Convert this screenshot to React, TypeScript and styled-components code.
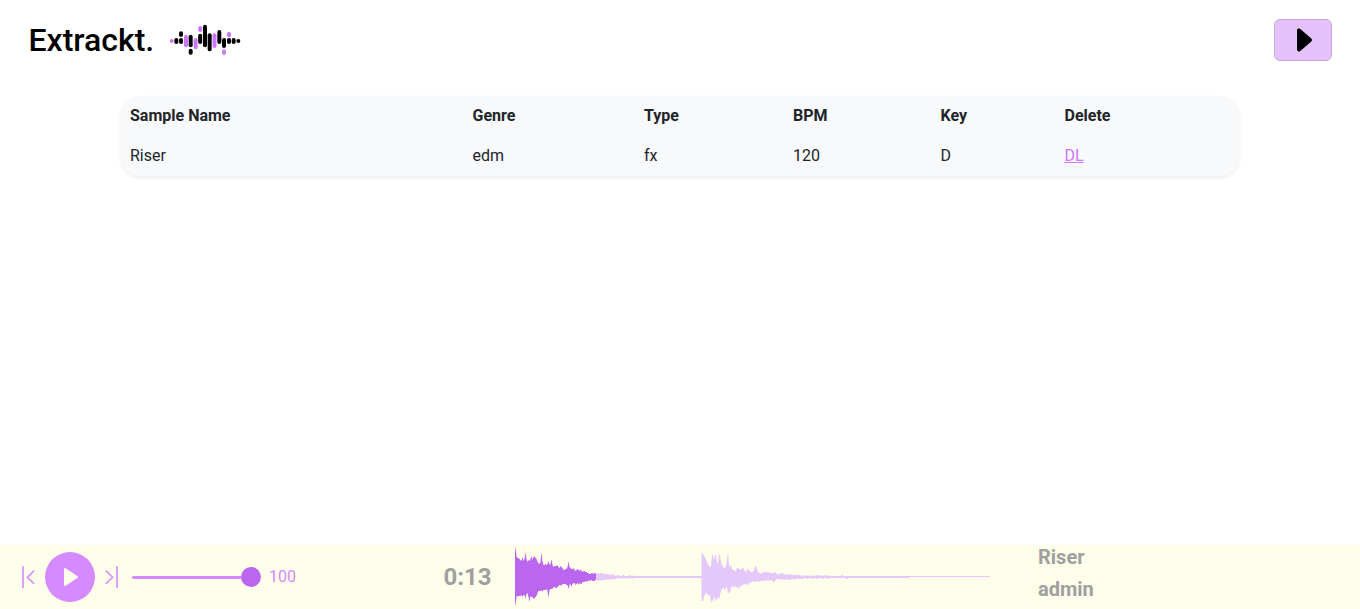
import React from 'react';
import styled, { createGlobalStyle } from 'styled-components';

const GlobalStyle = createGlobalStyle`
  *, *::before, *::after { box-sizing: border-box; }
  body {
    margin: 0;
    background: #fff;
    color: #212529;
    font-family: Roboto, "Liberation Sans", sans-serif;
    font-size: 16px;
    line-height: 1.5;
  }
`;

const Page = styled.div`
  display: flex;
  flex-direction: column;
  height: 100vh;
  overflow: hidden;
`;

const Header = styled.header`
  display: flex;
  align-items: center;
  justify-content: space-between;
  height: 80px;
  padding: 0 28px 0 28.5px;
`;

const Brand = styled.div`
  display: flex;
  align-items: center;
  gap: 14.5px;
`;

const BrandName = styled.h1`
  margin: 0;
  color: #000;
  font-size: 32px;
  font-weight: 500;
  line-height: 40px;
`;

const MenuButton = styled.button`
  display: flex;
  align-items: center;
  justify-content: center;
  width: 58px;
  height: 42px;
  padding: 0;
  border: 1px solid #c9a9dd;
  border-radius: 6px;
  background: #e5c0fb;
`;

const Main = styled.main`
  flex: 1;
  padding: 16px 121px 0;
`;

const Table = styled.div`
  padding-left: 1px;
  border-radius: 20px;
  background: #f8f9fb;
  box-shadow: 0 2px 4px rgba(0, 0, 0, 0.075);
  overflow: hidden;
`;

const Row = styled.div<{ $head?: boolean }>`
  display: grid;
  grid-template-columns: 342.5px 171.5px 149px 147.5px 124px 1fr;
  font-weight: ${(p) => (p.$head ? 700 : 400)};
`;

const Cell = styled.div`
  padding: 8px;
`;

const DeleteLink = styled.a`
  color: #cc77ff;
  text-decoration: underline;
`;

const Player = styled.footer`
  display: flex;
  align-items: center;
  height: 64px;
  padding-left: 22px;
  background: #fefeeb;
`;

const Transport = styled.div`
  display: flex;
  align-items: center;
  gap: 10px;
  width: 96px;
`;

const PlayButton = styled.div`
  display: flex;
  flex: none;
  align-items: center;
  justify-content: center;
  width: 50px;
  height: 50px;
  border-radius: 50%;
  background: #d68aff;
`;

const Volume = styled.div`
  display: flex;
  align-items: center;
  width: 129px;
  margin-left: 14px;
`;

const Track = styled.div`
  flex: 1;
  height: 3px;
  border-radius: 2px 0 0 2px;
  background: #d68aff;
`;

const Knob = styled.div`
  width: 20px;
  height: 20px;
  border-radius: 50%;
  background: #bb66ee;
`;

const VolumeValue = styled.span`
  width: 182.5px;
  padding-left: 8px;
  color: #d68aff;
`;

const Time = styled.div`
  width: 71.5px;
  color: #a0a0a0;
  font-size: 24px;
  font-weight: 700;
`;

const TrackInfo = styled.div`
  margin-left: 48px;
  padding-bottom: 8px;
  color: #a0a0a0;
  font-size: 20px;
  font-weight: 700;
  line-height: 32px;
`;

/* Each bar: centre x, top, bottom, accent flag */
const LOGO_BARS: [number, number, number, boolean?][] = [
  [35, 72, 84, true], [49, 69, 87], [63, 49, 66], [63, 69, 87], [78, 59, 97, true],
  [92, 59, 97], [92, 101, 119], [107, 69, 103, true], [120.5, 33, 51, true], [120.5, 56, 87],
  [135, 29, 97], [149, 55, 109], [163.5, 55, 99, true], [178, 45, 87], [192, 69, 99],
  [192, 103, 120, true], [207, 50, 67, true], [207, 69, 87], [221, 69, 87], [235, 72, 84],
];

const Logo = () => (
  <svg width="72" height="32" viewBox="27 27 216 96">
    {LOGO_BARS.map(([x, top, bottom, accent], i) => (
      <rect key={i} x={x - 6} y={top} width="12" height={bottom - top} rx="6" fill={accent ? '#cc77ff' : '#000'} />
    ))}
  </svg>
);

const SkipSvg = styled.svg`
  flex: none;
`;

const SkipIcon = ({ next }: { next?: boolean }) => (
  <SkipSvg width="13" height="22" viewBox="0 0 13 22" fill="none" stroke="#d68aff" strokeWidth="1.6">
    {next ? <path d="M.7 4.5 7.6 11.2.7 18M12 0v22" /> : <path d="M12.3 4.5 5.4 11.2l6.9 6.8M1 0v22" />}
  </SkipSvg>
);

/* Amplitudes above and below the centre line, one value per pixel column */
const FIRST_UP = [
  29, 21, 19, 19, 18, 17, 16, 20, 16, 18, 25, 18, 15, 17, 16, 18, 21, 17, 20, 21,
  19, 18, 15, 14, 13, 15, 25, 16, 12, 12, 13, 12, 13, 16, 12, 13, 18, 12, 10, 11,
  11, 11, 12, 10, 9, 11, 10, 9, 7, 7, 8, 8, 10, 16, 10, 9, 8, 8, 9, 7,
  6, 7, 8, 7, 6, 8, 6, 5, 6, 6, 5, 5, 4, 4, 3, 3, 4, 4, 3, 4, 4,
];
const FIRST_DOWN = [
  28, 20, 19, 19, 19, 19, 18, 20, 18, 18, 22, 17, 16, 20, 25, 19, 20, 20, 22, 21,
  20, 19, 16, 14, 14, 14, 13, 15, 13, 13, 13, 12, 14, 21, 13, 12, 12, 12, 10, 10,
  11, 11, 10, 9, 8, 8, 9, 7, 7, 7, 7, 8, 8, 12, 8, 7, 10, 7, 6, 6,
  8, 7, 6, 8, 6, 7, 7, 5, 5, 5, 4, 5, 4, 4, 3, 4, 3, 4, 4, 4, 3,
];

const TAIL_UP = [
  3, 4, 4, 3, 4, 4, 4, 3, 3, 3, 3, 3, 3, 2, 2, 3, 3, 2, 2, 1,
  1, 2, 2, 1, 1, 1, 2, 2, 1, 1, 1, 1, 1, 2, 2, 1, 1, 1, 2, 1,
];
const TAIL_DOWN = [
  3, 3, 4, 3, 4, 3, 3, 4, 3, 3, 2, 3, 2, 3, 2, 3, 2, 2, 2, 2,
  1, 1, 2, 1, 2, 1, 1, 2, 1, 1, 2, 1, 1, 1, 2, 1, 2, 1, 1, 1,
];

const SECOND_UP = [
  24, 23, 21, 20, 18, 15, 13, 11, 10, 11, 22, 22, 16, 23, 21, 14, 14, 23, 22, 15,
  12, 10, 9, 9, 11, 18, 25, 12, 10, 12, 8, 7, 7, 6, 6, 9, 9, 8, 8, 7,
  9, 10, 7, 6, 5, 7, 8, 7, 6, 5, 5, 5, 7, 11, 11, 8, 5, 4, 4, 3,
  4, 5, 4, 5, 6, 5, 4, 5, 4, 4, 4, 3, 4, 5, 4, 3, 2, 3, 4, 3,
  4, 4, 2, 3, 3, 2, 3, 3, 2, 3, 2, 2, 2, 2, 2, 2, 2, 2, 1, 2,
];
const SECOND_DOWN = [
  24, 24, 20, 18, 15, 17, 18, 19, 18, 27, 22, 25, 19, 22, 25, 20, 22, 22, 18, 14,
  12, 11, 12, 13, 10, 10, 17, 15, 16, 11, 9, 11, 9, 9, 11, 9, 13, 9, 11, 9,
  8, 8, 7, 7, 8, 7, 9, 6, 6, 5, 5, 4, 4, 5, 5, 4, 4, 5, 5, 4,
  3, 4, 4, 4, 3, 4, 3, 4, 3, 3, 4, 4, 6, 4, 2, 2, 2, 3, 2, 2,
  3, 2, 3, 3, 2, 2, 3, 3, 2, 3, 2, 2, 3, 2, 2, 1, 2, 2, 2, 2,
];

const END_UP = Array.from({ length: 30 }, (_, i) => (i % 3 === 0 || i % 7 === 2 ? 2 : 1));
const END_DOWN = Array.from({ length: 30 }, (_, i) => (i % 5 < 2 ? 2 : 1));

const CENTER = 32;

/* Closed outline running along the upper edge and back along the lower one */
const outline = (up: number[], down: number[], start: number) => {
  const end = start + up.length;
  const upper = up.map((v, i) => `${start + i + 0.5},${CENTER - v}`);
  const lower = down.map((v, i) => `${start + i + 0.5},${CENTER + v}`).reverse();
  return [
    `${start},${CENTER - up[0]}`,
    ...upper,
    `${end},${CENTER - up[up.length - 1]}`,
    `${end},${CENTER + down[down.length - 1]}`,
    ...lower,
    `${start},${CENTER + down[0]}`,
  ].join(' ');
};

const Waveform = () => (
  <svg width="475" height="64" viewBox="0 0 475 64">
    <g fill="#e5c8fa">
      <polygon points={outline(TAIL_UP, TAIL_DOWN, 81)} />
      <rect x="120" y="31" width="67" height="2" />
      <polygon points={outline(SECOND_UP, SECOND_DOWN, 186.5)} />
      <polygon points={outline(END_UP, END_DOWN, 286.5)} />
      <rect x="316" y="31" width="79" height="2" />
      <path d="M326 30h2v1h-2zM331 33h2v1h-2z" />
      <rect x="395" y="31" width="80" height="1" />
    </g>
    <polygon fill="#bb66ee" points={outline(FIRST_UP, FIRST_DOWN, 0)} />
  </svg>
);

export default function App() {
  return (
    <>
      <GlobalStyle />
      <Page>
        <Header>
          <Brand>
            <BrandName>Extrackt.</BrandName>
            <Logo />
          </Brand>
          <MenuButton aria-label="Play">
            <svg width="32" height="32" viewBox="0 0 16 16" fill="#000">
              <path d="m12.14 8.753-5.482 4.796c-.646.566-1.658.106-1.658-.753V3.204a1 1 0 0 1 1.659-.753l5.48 4.796a1 1 0 0 1 0 1.506z" />
            </svg>
          </MenuButton>
        </Header>
        <Main>
          <Table>
            <Row $head>
              {['Sample Name', 'Genre', 'Type', 'BPM', 'Key', 'Delete'].map((label) => (
                <Cell key={label}>{label}</Cell>
              ))}
            </Row>
            <Row>
              {['Riser', 'edm', 'fx', '120', 'D'].map((value) => (
                <Cell key={value}>{value}</Cell>
              ))}
              <Cell><DeleteLink>DL</DeleteLink></Cell>
            </Row>
          </Table>
        </Main>
        <Player>
          <Transport>
            <SkipIcon />
            <PlayButton>
              <svg width="16" height="20" viewBox="0 0 16 20">
                <path d="M3 2v16L15 10z" fill="#fefeeb" stroke="#fefeeb" strokeWidth="2" strokeLinejoin="round" />
              </svg>
            </PlayButton>
            <SkipIcon next />
          </Transport>
          <Volume>
            <Track />
            <Knob />
          </Volume>
          <VolumeValue>100</VolumeValue>
          <Time>0:13</Time>
          <Waveform />
          <TrackInfo>
            <div>Riser</div>
            <div>admin</div>
          </TrackInfo>
        </Player>
      </Page>
    </>
  );
}
